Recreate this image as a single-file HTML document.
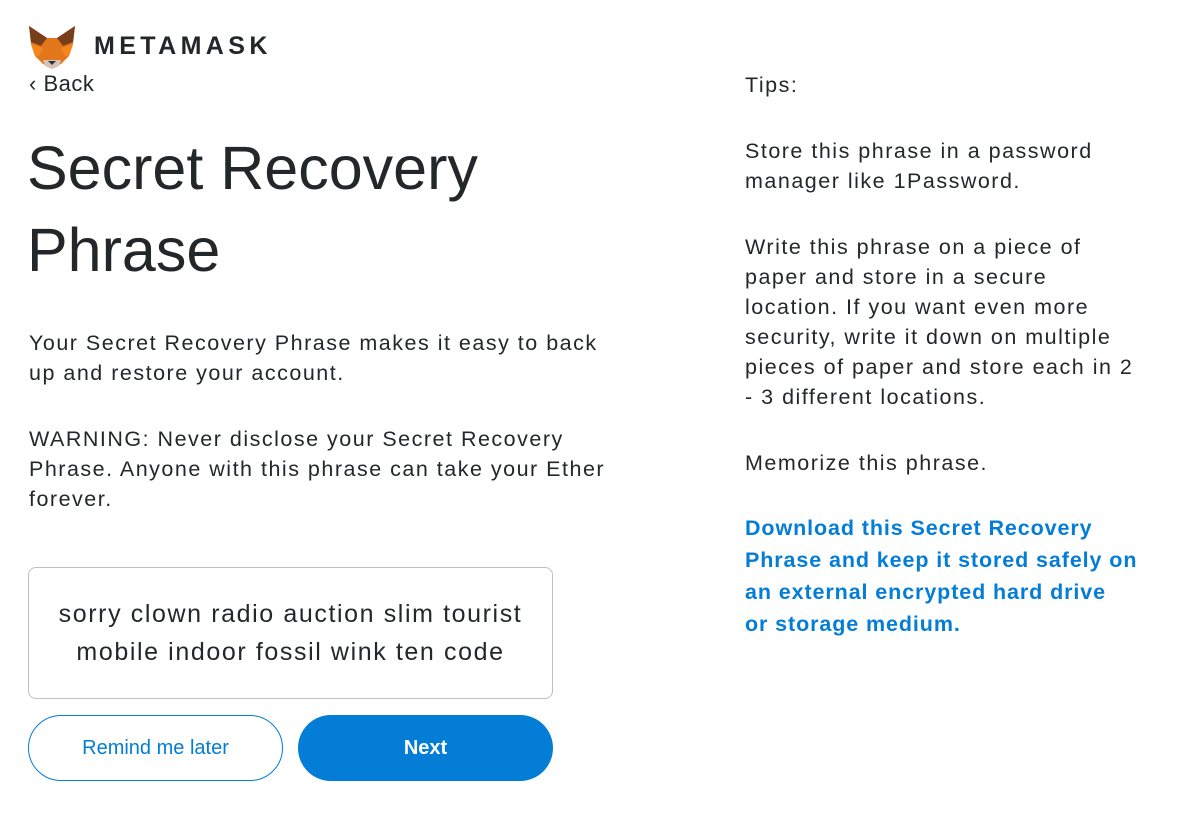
<!DOCTYPE html>
<html><head><meta charset="utf-8"><style>
body{margin:0;width:1192px;height:832px;background:#fff;font-family:"Liberation Sans",sans-serif;color:#24272a;position:relative;overflow:hidden}
.a{position:absolute;white-space:nowrap}
p{margin:0}
</style></head><body>
<svg class="a" style="left:27px;top:24px" width="50" height="46" viewBox="0 0 50 46">
<polygon points="2,2 20,14 30,14 48,2 46,20 42,32 34,40 25,44 16,40 8,32 4,20" fill="#e2761b"/>
<polygon points="2,2 20,14 14,22 4,18" fill="#763e1a"/>
<polygon points="48,2 30,14 36,22 46,18" fill="#763e1a"/>
<polygon points="4,20 16,24 12,32 8,32" fill="#f6851b"/>
<polygon points="46,20 34,24 38,32 42,32" fill="#f6851b"/>
<polygon points="16,36 34,36 32,42 25,45 18,42" fill="#d7c1b3"/>
<polygon points="21,37 29,37 25,41" fill="#233447"/>
</svg>
<div class="a" style="left:94px;top:32px;font-size:25px;letter-spacing:4.4px;font-weight:bold;color:#24272a">METAMASK</div>
<div class="a" style="left:29px;top:71px;font-size:22px;letter-spacing:0.5px">‹ Back</div>
<div class="a" style="left:27px;top:127px;font-size:61px;line-height:82px">Secret Recovery<br>Phrase</div>
<div class="a" style="left:29px;top:328px;font-size:21.5px;letter-spacing:1.5px;line-height:30px">Your Secret Recovery Phrase makes it easy to back<br>up and restore your account.</div>
<div class="a" style="left:29px;top:424px;font-size:21.5px;letter-spacing:1.5px;line-height:30px">WARNING: Never disclose your Secret Recovery<br>Phrase. Anyone with this phrase can take your Ether<br>forever.</div>
<div class="a" style="left:28px;top:567px;width:525px;height:132px;border:1px solid #bbc0c5;border-radius:8px;box-sizing:border-box;display:flex;align-items:center;justify-content:center;text-align:center;font-size:25px;letter-spacing:1.6px;line-height:38px">sorry clown radio auction slim tourist<br>mobile indoor fossil wink ten code</div>
<div class="a" style="left:28px;top:715px;width:255px;height:66px;border:1px solid #037dd6;border-radius:33px;box-sizing:border-box;color:#037dd6;font-size:20px;display:flex;align-items:center;justify-content:center">Remind me later</div>
<div class="a" style="left:298px;top:715px;width:255px;height:66px;background:#037dd6;border-radius:33px;color:#fff;font-size:20px;font-weight:bold;display:flex;align-items:center;justify-content:center">Next</div>
<div class="a" style="left:745px;top:70px;font-size:21.5px;letter-spacing:1.5px;line-height:30px">
<p>Tips:</p><p style="margin-top:36px">Store this phrase in a password<br>manager like 1Password.</p>
<p style="margin-top:36px">Write this phrase on a piece of<br>paper and store in a secure<br>location. If you want even more<br>security, write it down on multiple<br>pieces of paper and store each in 2<br>- 3 different locations.</p>
<p style="margin-top:36px">Memorize this phrase.</p>
<p style="margin-top:34px;color:#037dd6;font-weight:bold;line-height:32px;letter-spacing:0.9px">Download this Secret Recovery<br>Phrase and keep it stored safely on<br>an external encrypted hard drive<br>or storage medium.</p>
</div>
</body></html>
